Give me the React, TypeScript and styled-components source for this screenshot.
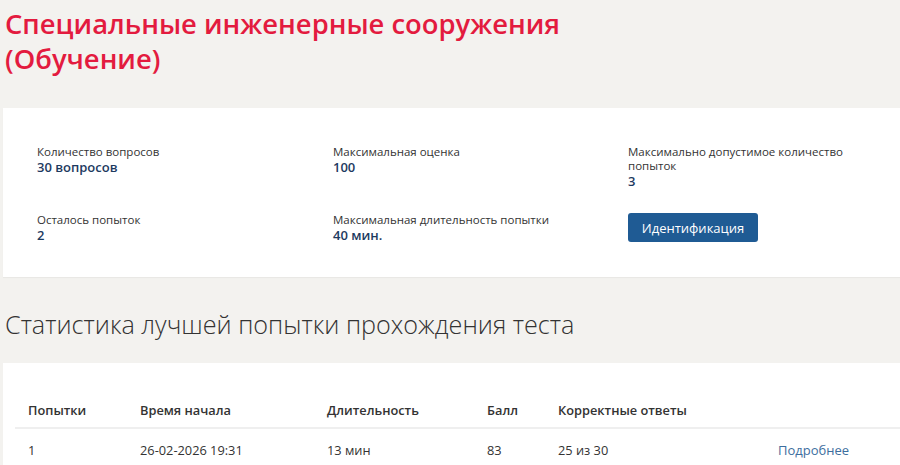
import React from "react";
import styled, { createGlobalStyle } from "styled-components";

const Global = createGlobalStyle`
  html, body { margin: 0; padding: 0; background: #f3f2ef; }
  body { font-family: "Open Sans", "Noto Sans", sans-serif; color: #333; }
`;

const Page = styled.div`
  padding: 6px 0 0 3px;
  display: flex;
  flex-direction: column;
`;

const Title = styled.h1`
  margin: 0 0 0 2px;
  font-family: "Open Sans", sans-serif;
  font-weight: 600;
  font-size: 27.4px;
  line-height: 35px;
  color: #e31b3f;
`;

const Card = styled.div`
  background: #fff;
  margin-top: 32px;
  padding: 37px 0 33px 34px;
  display: grid;
  grid-template-columns: 296px 295px 1fr;
  row-gap: 23px;
  box-shadow: 0 1px 1px rgba(0,0,0,0.04);
`;

const Item = styled.div`
  display: flex;
  flex-direction: column;
`;

const Label = styled.div`
  font-size: 11.5px;
  line-height: 14px;
  color: #333;
  max-width: 220px;
`;

const Value = styled.div`
  font-size: 13px;
  font-weight: 600;
  line-height: 17px;
  color: #1d3a5f;
`;

const Button = styled.button`
  align-self: flex-start;
  margin-top: 0;
  width: 130px;
  height: 29px;
  border: none;
  border-radius: 3px;
  background: #1f5b94;
  color: #fff;
  font-family: "Open Sans", sans-serif;
  font-size: 13px;
  font-weight: 500;
  cursor: pointer;
`;

const Heading = styled.h2`
  margin: 30px 0 0 2px;
  font-family: "Open Sans", sans-serif;
  font-weight: 300;
  font-size: 25.2px;
  line-height: 34px;
  color: #333;
`;

const TableCard = styled.div`
  background: #fff;
  margin-top: 22px;
  padding: 38px 0 0 12px;
`;

const Row = styled.div<{ $head?: boolean }>`
  display: grid;
  grid-template-columns: 112px 187px 160px 71px 220px 1fr;
  padding-left: 13px;
  height: ${(p) => (p.$head ? "26px" : "42px")};
  align-items: ${(p) => (p.$head ? "start" : "center")};
  border-bottom: ${(p) => (p.$head ? "2px solid #efefef" : "none")};
  font-size: 12.8px;
  font-weight: ${(p) => (p.$head ? 600 : 400)};
  color: #333;
`;

const Link = styled.a`
  color: #3d6e9e;
  text-decoration: none;
  font-size: 13px;
`;

export default function App() {
  return (
    <>
      <Global />
      <Page>
        <Title>
          Специальные инженерные сооружения
          <br />
          (Обучение)
        </Title>
        <Card>
          <Item>
            <Label>Количество вопросов</Label>
            <Value>30 вопросов</Value>
          </Item>
          <Item>
            <Label>Максимальная оценка</Label>
            <Value>100</Value>
          </Item>
          <Item>
            <Label>Максимально допустимое количество попыток</Label>
            <Value>3</Value>
          </Item>
          <Item>
            <Label>Осталось попыток</Label>
            <Value>2</Value>
          </Item>
          <Item>
            <Label>Максимальная длительность попытки</Label>
            <Value>40 мин.</Value>
          </Item>
          <Item>
            <Button>Идентификация</Button>
          </Item>
        </Card>
        <Heading>Статистика лучшей попытки прохождения теста</Heading>
        <TableCard>
          <Row $head>
            <span>Попытки</span>
            <span>Время начала</span>
            <span>Длительность</span>
            <span>Балл</span>
            <span>Корректные ответы</span>
            <span />
          </Row>
          <Row>
            <span>1</span>
            <span>26-02-2026 19:31</span>
            <span>13 мин</span>
            <span>83</span>
            <span>25 из 30</span>
            <span>
              <Link href="#">Подробнее</Link>
            </span>
          </Row>
        </TableCard>
      </Page>
    </>
  );
}
